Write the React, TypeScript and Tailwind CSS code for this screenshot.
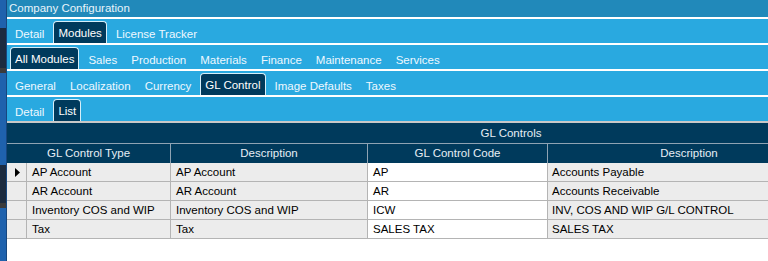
import React from 'react';

type Tab = { label: string; active?: boolean };

const tabRows: Tab[][] = [
  [{ label: 'Detail' }, { label: 'Modules', active: true }, { label: 'License Tracker' }],
  [
    { label: 'All Modules', active: true },
    { label: 'Sales' },
    { label: 'Production' },
    { label: 'Materials' },
    { label: 'Finance' },
    { label: 'Maintenance' },
    { label: 'Services' },
  ],
  [
    { label: 'General' },
    { label: 'Localization' },
    { label: 'Currency' },
    { label: 'GL Control', active: true },
    { label: 'Image Defaults' },
    { label: 'Taxes' },
  ],
  [{ label: 'Detail' }, { label: 'List', active: true }],
];

const rows = [
  { type: 'AP Account', desc: 'AP Account', code: 'AP', codeDesc: 'Accounts Payable', current: true },
  { type: 'AR Account', desc: 'AR Account', code: 'AR', codeDesc: 'Accounts Receivable' },
  { type: 'Inventory COS and WIP', desc: 'Inventory COS and WIP', code: 'ICW', codeDesc: 'INV, COS AND WIP G/L CONTROL' },
  { type: 'Tax', desc: 'Tax', code: 'SALES TAX', codeDesc: 'SALES TAX' },
];

function TabRow({ tabs }: { tabs: Tab[] }) {
  return (
    <div className="flex h-[24px] gap-[4px] bg-[#29a9e0] pl-[3px]">
      {tabs.map((t) =>
        t.active ? (
          <div
            key={t.label}
            className="mt-[2px] rounded-t-[4px] border border-b-0 border-[#d6eef9] bg-[#003a5c] px-[4px] pt-[4px] leading-[14px] text-white"
          >
            {t.label}
          </div>
        ) : (
          <div key={t.label} className="px-[5px] pt-[8px] leading-[14px] text-[#eef8ff]">
            {t.label}
          </div>
        )
      )}
    </div>
  );
}

export default function App() {
  const cols = 'grid grid-cols-[20px_144px_197px_180px_282px_185px]';
  return (
    <div className="flex h-[261px] w-[768px] overflow-hidden bg-white font-['Liberation_Sans',Arial,sans-serif]">
      {/* window behind, peeking in on the left */}
      <div className="flex w-[7px] shrink-0 flex-col border-r border-[#17477f] bg-[#1f62ad]">
        <div className="h-[28px]" />
        <div className="h-[40px] bg-[#1c2b3f]" />
        <div className="h-[5px] bg-[#3b3b3b]" />
        <div className="h-[92px]" />
        <div className="h-[38px] bg-[#1c2b3f]" />
        <div className="h-[5px] bg-[#3b3b3b]" />
      </div>

      <div className="flex min-w-0 flex-1 flex-col text-[11.5px]">
        <div className="h-[17px] bg-[#2189ba] pl-[2px] leading-[17px] text-[#e8f4fa]">Company Configuration</div>
        <div className="flex flex-col gap-[2px] bg-white pt-[2px]">
          {tabRows.map((r, i) => (
            <TabRow key={i} tabs={r} />
          ))}
        </div>
        <div className="h-[2px] bg-[#c8c8c8]" />

        {/* grid */}
        <div className="overflow-hidden">
          <div className="w-[1008px]">
            <div className="h-[21px] border-b border-[#8fa3b3] bg-[#003a5c] text-center leading-[20px] text-[#e6eef5]">
              GL Controls
            </div>
            <div className={`${cols} h-[19px] bg-[#003a5c] leading-[19px] text-[#e6eef5]`}>
              <div className="col-span-2 border-r border-[#8fa3b3] text-center">GL Control Type</div>
              <div className="border-r border-[#8fa3b3] text-center">Description</div>
              <div className="border-r border-[#8fa3b3] text-center">GL Control Code</div>
              <div className="text-center">Description</div>
              <div />
            </div>
            {rows.map((r) => (
              <div key={r.type} className={`${cols} h-[19px] leading-[18px] text-black`}>
                <div className="flex items-center border-r border-b border-[#b4b4b4] bg-[#ececec] pl-[8px]">
                  {r.current && (
                    <svg width="5" height="9" viewBox="0 0 5 9">
                      <path d="M0 0 L5 4.5 L0 9 Z" fill="#000" />
                    </svg>
                  )}
                </div>
                <div className="border-r border-b border-[#b4b4b4] bg-[#ececec] pl-[5px]">{r.type}</div>
                <div className="border-r border-b border-[#b4b4b4] bg-[#ececec] pl-[5px]">{r.desc}</div>
                <div className="border-r border-b border-[#b4b4b4] bg-white pl-[5px]">{r.code}</div>
                <div className="border-b border-[#b4b4b4] bg-[#ececec] pl-[4px]">{r.codeDesc}</div>
                <div className="border-b border-[#b4b4b4] bg-[#ececec]" />
              </div>
            ))}
          </div>
        </div>
      </div>
    </div>
  );
}
